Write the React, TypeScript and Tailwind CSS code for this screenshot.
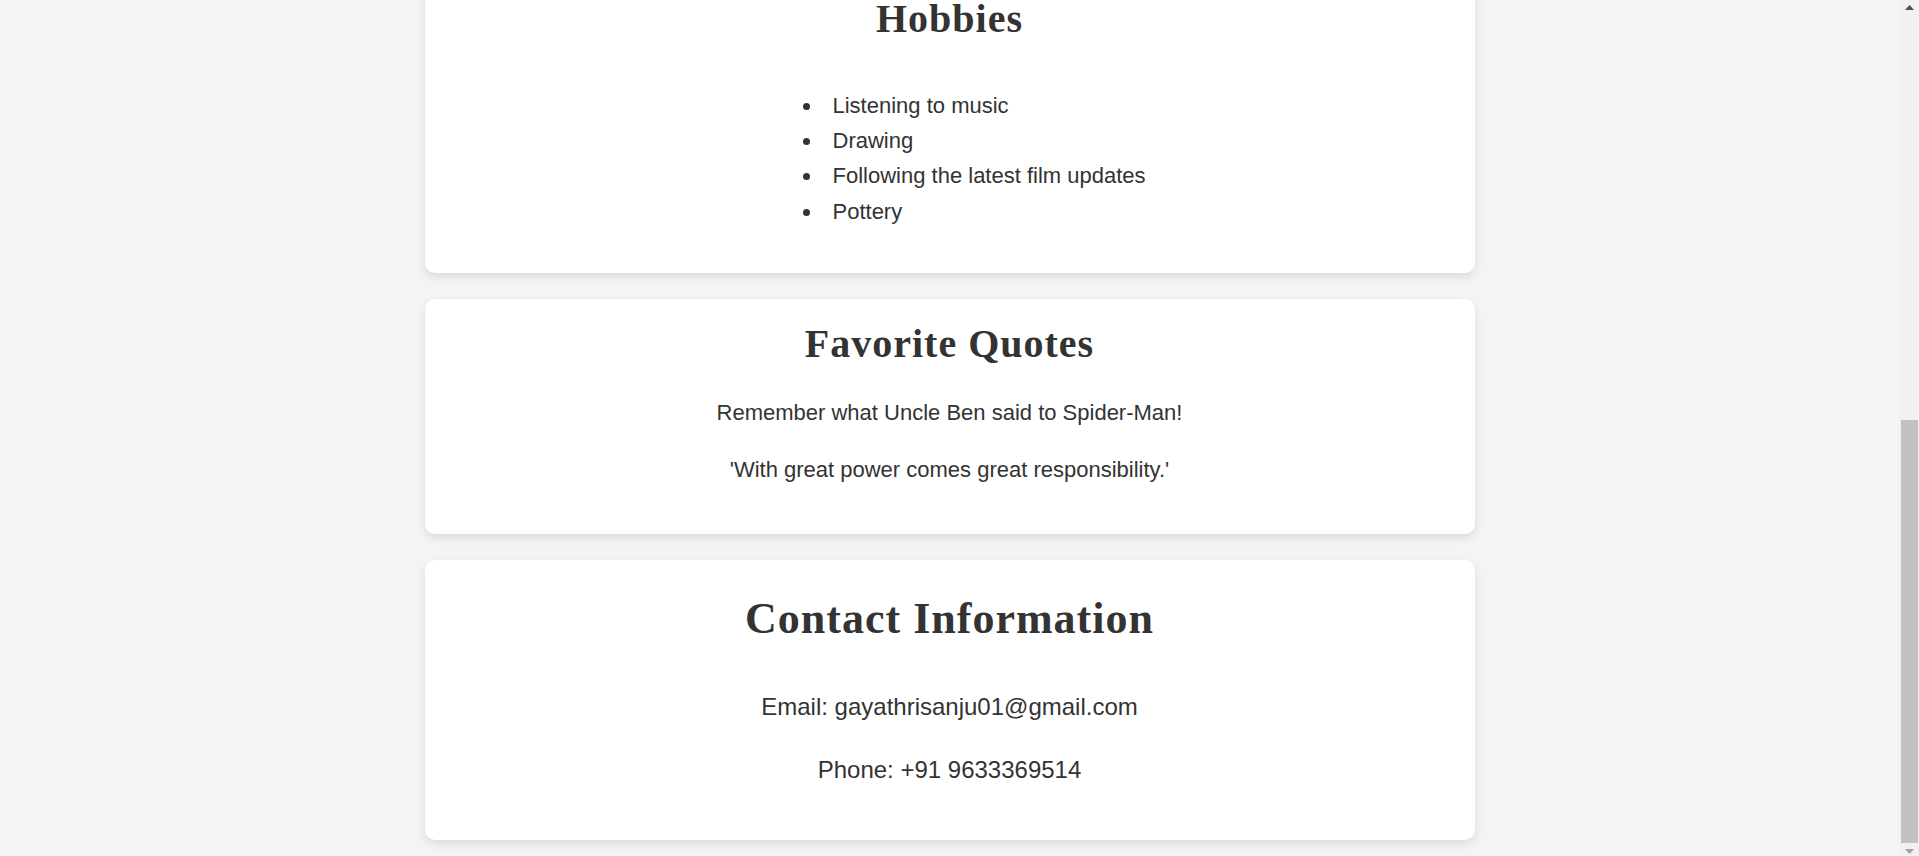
const hobbies = [
  "Listening to music",
  "Drawing",
  "Following the latest film updates",
  "Pottery",
];

const Card = ({ className, children }: { className: string; children: React.ReactNode }) => (
  <section
    className={`w-[1050px] shrink-0 rounded-[10px] bg-white text-center shadow-[0_4px_10px_rgba(0,0,0,0.1)] ${className}`}
  >
    {children}
  </section>
);

const Scrollbar = () => (
  <aside className="flex h-full w-[20px] shrink-0 flex-col bg-[#f1f1f1]">
    <div className="flex h-[17px] items-start justify-center pt-[5px]">
      <svg width="9" height="5" viewBox="0 0 9 5">
        <path d="M4.5 0L9 5H0z" fill="#505050" />
      </svg>
    </div>
    <div className="h-[403px]" />
    <div className="ml-[2px] h-[423px] w-[17px] bg-[#c1c1c1]" />
    <div className="flex flex-1 items-end justify-center pb-[2px]">
      <svg width="9" height="5" viewBox="0 0 9 5">
        <path d="M0 0H9L4.5 5z" fill="#a3a3a3" />
      </svg>
    </div>
  </aside>
);

export default function App() {
  const heading = "font-['Georgia','Liberation_Serif',serif] font-bold tracking-[1px] text-[#333]";
  return (
    <div className="flex h-screen overflow-hidden bg-[#f4f4f4] font-['Arial','Liberation_Sans',sans-serif] text-[#333]">
      <main className="flex flex-1 flex-col items-center gap-[26px]">
        {/* page is scrolled to the bottom: the top of this card sits above the fold */}
        <Card className="-mt-[29px] pt-[32px] pb-[44px]">
          <h2 className={`${heading} text-[40px] leading-[32px]`}>Hobbies</h2>
          <ul className="mt-[53px] ml-[358px] list-disc pl-10 text-left text-[22px] leading-[1.6]">
            {hobbies.map((h) => (
              <li key={h} className="pl-[10px]">
                {h}
              </li>
            ))}
          </ul>
        </Card>

        <Card className="pt-[22px] pb-[47px]">
          <h2 className={`${heading} text-[40px] leading-[46px]`}>Favorite Quotes</h2>
          <p className="mt-[28px] text-[22px] leading-[1.6]">Remember what Uncle Ben said to Spider-Man!</p>
          <p className="mt-[22px] text-[22px] leading-[1.6]">'With great power comes great responsibility.'</p>
        </Card>

        <Card className="pt-[34px] pb-[51px]">
          <h1 className={`${heading} text-[44px] leading-[50px]`}>Contact Information</h1>
          <p className="mt-[44px] text-[24px] leading-[1.6]">Email: gayathrisanju01@gmail.com</p>
          <p className="mt-[24px] text-[24px] leading-[1.6]">Phone: +91 9633369514</p>
        </Card>
      </main>
      <Scrollbar />
    </div>
  );
}
